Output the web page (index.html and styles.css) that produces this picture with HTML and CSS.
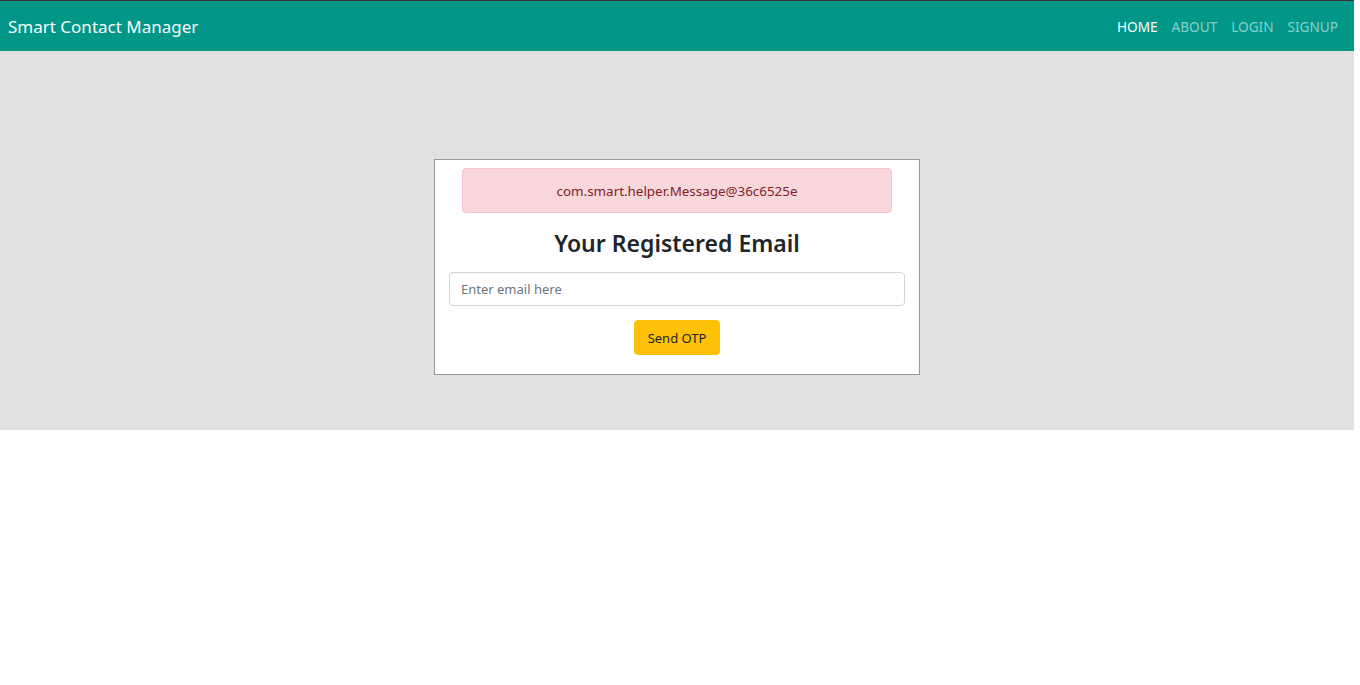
FILE: index.html
```html
<!DOCTYPE html>
<html>
<head>
<meta charset="utf-8">
<title>Smart Contact Manager</title>
<link rel="stylesheet" href="styles.css">
</head>
<body>
<div class="page">
  <nav class="navbar">
    <a class="brand" href="#">Smart Contact Manager</a>
    <ul class="nav-links">
      <li><a class="active" href="#">HOME</a></li>
      <li><a href="#">ABOUT</a></li>
      <li><a href="#">LOGIN</a></li>
      <li><a href="#">SIGNUP</a></li>
    </ul>
  </nav>
  <section class="banner">
    <div class="card">
      <div class="alert">com.smart.helper.Message@36c6525e</div>
      <h1 class="title">Your Registered Email</h1>
      <form class="form">
        <input class="input" type="email" placeholder="Enter email here">
        <button class="btn" type="button">Send OTP</button>
      </form>
    </div>
  </section>
</div>
</body>
</html>
```
FILE: styles.css
```css
* { box-sizing: border-box; }
html, body { margin: 0; padding: 0; }
body {
  font-family: "Noto Sans", "Open Sans", sans-serif;
  color: #212529;
  background: #fff;
  font-size: 14px;
}
.page {
  width: 1354px;
}
.navbar {
  height: 51px;
  background: #009688;
  border-top: 1px solid #333;
  display: flex;
  align-items: center;
  justify-content: space-between;
  padding: 0 16px 0 8px;
}
.brand {
  color: #fff;
  text-decoration: none;
  font-size: 17px;
}
.nav-links {
  list-style: none;
  margin: 0;
  padding: 0;
  display: flex;
  gap: 14px;
}
.nav-links a {
  color: rgba(255,255,255,0.55);
  text-decoration: none;
  font-size: 13.6px;
}
.nav-links a.active { color: #fff; }
.banner {
  background: #e1e1e1;
  height: 379px;
  padding-top: 108px;
  display: flex;
  justify-content: center;
  align-items: flex-start;
}
.card {
  width: 486px;
  background: #fff;
  border: 1px solid #999;
  padding: 8px 14px 19px 14px;
  display: flex;
  flex-direction: column;
  align-items: center;
}
.alert {
  width: 430px;
  height: 45px;
  background: #f8d7da;
  border: 1px solid #f5c2c7;
  border-radius: 4px;
  color: #842029;
  display: flex;
  align-items: center;
  justify-content: center;
  font-size: 13.4px;
}
.title {
  margin: 13px 0 12px 0;
  font-size: 23px;
  font-weight: 600;
  line-height: 34px;
}
.form {
  width: 100%;
  display: flex;
  flex-direction: column;
  align-items: center;
  gap: 14px;
}
.input {
  width: 100%;
  height: 34px;
  border: 1px solid #ced4da;
  border-radius: 4px;
  padding: 0 11px;
  font-family: inherit;
  font-size: 13px;
  color: #212529;
}
.input::placeholder { color: #6c757d; }
.btn {
  height: 35px;
  width: 86px;
  background: #ffc107;
  border: 1px solid #ffc107;
  border-radius: 4px;
  color: #212529;
  font-family: inherit;
  font-size: 13px;
  padding: 0;
}
```
